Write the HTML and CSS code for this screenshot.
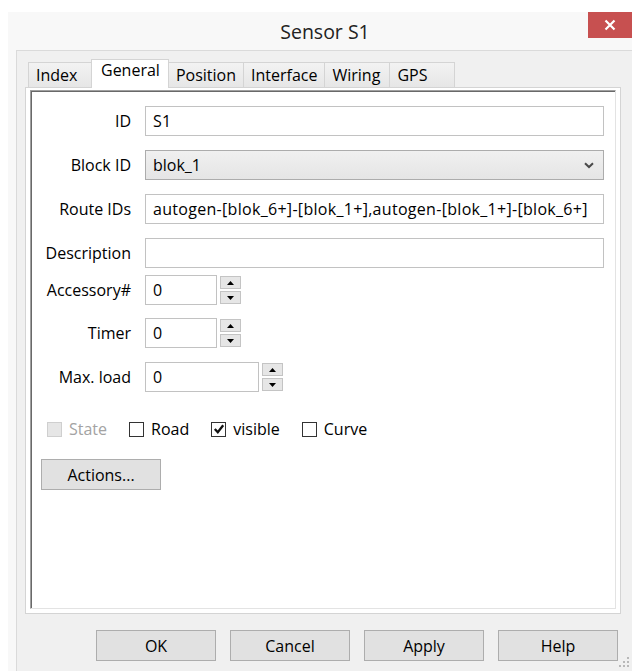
FILE: index.html
```html
<!DOCTYPE html>
<html>
<head>
<meta charset="utf-8">
<title>Sensor S1</title>
<link rel="stylesheet" href="styles.css">
</head>
<body>
<div class="window">
  <div class="titlebar">
    <span class="title">Sensor S1</span>
    <div class="close">
      <svg width="12" height="12" viewBox="0 0 12 12"><path d="M1.5 1.5 L10.5 10.5 M10.5 1.5 L1.5 10.5" stroke="#fff" stroke-width="2.2" fill="none"/></svg>
    </div>
  </div>
  <div class="client">
    <div class="tabctl">
      <div class="tabstrip">
        <span class="tab">Index</span>
        <span class="tab active">General</span>
        <span class="tab">Position</span>
        <span class="tab">Interface</span>
        <span class="tab">Wiring</span>
        <span class="tab">GPS</span>
      </div>
      <div class="tabpanel">
        <div class="sunken">
          <div class="row first">
            <span class="lbl">ID</span>
            <div class="input wide">S1</div>
          </div>
          <div class="row">
            <span class="lbl">Block ID</span>
            <div class="select wide">
              <span>blok_1</span>
              <svg class="chev" width="10" height="7" viewBox="0 0 10 7"><path d="M1 1.2 L5 5 L9 1.2" stroke="#4a4a4a" stroke-width="2" fill="none"/></svg>
            </div>
          </div>
          <div class="row">
            <span class="lbl">Route IDs</span>
            <div class="input wide">autogen-[blok_6+]-[blok_1+],autogen-[blok_1+]-[blok_6+]</div>
          </div>
          <div class="row">
            <span class="lbl">Description</span>
            <div class="input wide"></div>
          </div>
          <div class="row tight">
            <span class="lbl">Accessory#</span>
            <div class="input num">0</div>
            <div class="spin">
              <span class="sb"><svg width="7" height="4" viewBox="0 0 7 4"><path d="M0 4 L3.5 0 L7 4 Z" fill="#000"/></svg></span>
              <span class="sb"><svg width="7" height="4" viewBox="0 0 7 4"><path d="M0 0 L3.5 4 L7 0 Z" fill="#000"/></svg></span>
            </div>
          </div>
          <div class="row r13">
            <span class="lbl">Timer</span>
            <div class="input num">0</div>
            <div class="spin">
              <span class="sb"><svg width="7" height="4" viewBox="0 0 7 4"><path d="M0 4 L3.5 0 L7 4 Z" fill="#000"/></svg></span>
              <span class="sb"><svg width="7" height="4" viewBox="0 0 7 4"><path d="M0 0 L3.5 4 L7 0 Z" fill="#000"/></svg></span>
            </div>
          </div>
          <div class="row">
            <span class="lbl">Max. load</span>
            <div class="input numwide">0</div>
            <div class="spin">
              <span class="sb"><svg width="7" height="4" viewBox="0 0 7 4"><path d="M0 4 L3.5 0 L7 4 Z" fill="#000"/></svg></span>
              <span class="sb"><svg width="7" height="4" viewBox="0 0 7 4"><path d="M0 0 L3.5 4 L7 0 Z" fill="#000"/></svg></span>
            </div>
          </div>

          <div class="checks">
            <label class="chk disabled"><span class="box"></span>State</label>
            <label class="chk"><span class="box"></span>Road</label>
            <label class="chk"><span class="box"><svg width="12" height="12" viewBox="0 0 12 12"><path d="M1.8 6 L4.8 9.3 L10.2 2.3" stroke="#111" stroke-width="2.3" fill="none"/></svg></span>visible</label>
            <label class="chk"><span class="box"></span>Curve</label>
          </div>

          <div class="btn actions">Actions...</div>
        </div>
      </div>
    </div>
    <div class="buttons">
      <div class="btn">OK</div>
      <div class="btn">Cancel</div>
      <div class="btn">Apply</div>
      <div class="btn">Help</div>
    </div>
    <svg class="grip" width="11" height="11" viewBox="0 0 11 11">
      <rect x="8" y="0" width="2" height="2" fill="#b8b8b8"/>
      <rect x="4" y="4" width="2" height="2" fill="#b8b8b8"/>
      <rect x="8" y="4" width="2" height="2" fill="#b8b8b8"/>
      <rect x="0" y="8" width="2" height="2" fill="#b8b8b8"/>
      <rect x="4" y="8" width="2" height="2" fill="#b8b8b8"/>
      <rect x="8" y="8" width="2" height="2" fill="#b8b8b8"/>
    </svg>
  </div>
</div>
</body>
</html>
```
FILE: styles.css
```css
* { box-sizing: border-box; }

html, body {
  margin: 0;
  padding: 0;
  background: #ffffff;
  overflow: hidden;
}

body {
  font-family: "Open Sans", "Noto Sans", sans-serif;
  font-size: 16px;
  color: #000;
}

.window {
  position: relative;
  margin: 12px 0 0 8px;
  width: 632px;
  height: 659px;
  background: #f8f8f8;
}

.titlebar {
  position: relative;
  height: 38px;
  display: flex;
  align-items: center;
  justify-content: center;
  padding-left: 2px;
}

.title {
  font-size: 19.5px;
  color: #222;
}

.close {
  position: absolute;
  top: 0;
  right: 8px;
  width: 44px;
  height: 26px;
  background: #c75050;
  display: flex;
  align-items: center;
  justify-content: center;
}

.client {
  position: relative;
  margin-left: 8px;
  height: 621px;
  background: #f0f0f0;
  border-top: 1px solid #dadada;
  border-left: 1px solid #dadada;
  padding: 8px 0 0 8px;
}

.tabctl {
  width: 596px;
}

.tabstrip {
  display: flex;
  align-items: flex-end;
  height: 28px;
  padding-left: 3px;
  position: relative;
  z-index: 1;
}

.tab {
  height: 25px;
  min-width: 66px;
  padding: 2px 7px 0 7px;
  border: 1px solid #d4d4d4;
  border-bottom: none;
  margin-right: -1px;
  background: linear-gradient(#f2f2f2, #e6e6e6);
  line-height: 20px;
}

.tab.active {
  height: 29px;
  margin: 0 -2px -1px -2px;
  padding: 0 8px 0 9px;
  background: #ffffff;
  position: relative;
  z-index: 2;
}

.tab.active + .tab { margin-left: 1px; }

.tabpanel {
  height: 527px;
  background: #ffffff;
  border: 1px solid #d4d4d4;
  padding: 2px 4px 4px 4px;
}

.sunken {
  height: 519px;
  border-top: 1px solid #a0a0a0;
  border-left: 1px solid #a0a0a0;
  border-right: 1px solid #e3e3e3;
  border-bottom: 1px solid #e3e3e3;
  box-shadow: inset 1px 1px 0 #696969;
  padding: 0 11px 0 1px;
}

.row {
  display: flex;
  align-items: center;
  height: 30px;
  margin-top: 14px;
}

.row.first { margin-top: 15px; }
.row.tight { margin-top: 7px; }
.row.r13 { margin-top: 13px; }

.lbl {
  width: 99px;
  margin-right: 14px;
  text-align: right;
  white-space: nowrap;
}

.input {
  height: 30px;
  border: 1px solid #c2c2c2;
  background: #fff;
  padding: 0 7px;
  line-height: 28px;
  white-space: nowrap;
  overflow: hidden;
  letter-spacing: 0.3px;
}

.wide { flex: 1; }
.num { width: 72px; }
.numwide { width: 114px; }

.select {
  height: 30px;
  border: 1px solid #acacac;
  background: linear-gradient(#f0f0f0, #e5e5e5);
  padding: 0 9px 0 7px;
  display: flex;
  align-items: center;
  justify-content: space-between;
}

.spin {
  display: flex;
  flex-direction: column;
  gap: 2px;
  margin-left: 3px;
}

.sb {
  width: 21px;
  height: 13px;
  border: 1px solid #c4c4c4;
  background: #e6e6e6;
  display: flex;
  align-items: center;
  justify-content: center;
}

.checks {
  display: flex;
  align-items: center;
  height: 20px;
  margin-top: 27px;
  padding-left: 15px;
  gap: 22px;
}

.chk {
  display: flex;
  align-items: center;
  gap: 7px;
}

.box {
  width: 15px;
  height: 15px;
  border: 1px solid #333;
  background: #fff;
  display: flex;
  align-items: center;
  justify-content: center;
}

.chk.disabled { color: #a3a3a3; }
.chk.disabled .box {
  border-color: #cfcfcf;
  background: #e6e6e6;
}

.btn {
  width: 120px;
  height: 31px;
  border: 1px solid #adadad;
  background: #e1e1e1;
  display: flex;
  align-items: center;
  justify-content: center;
}

.actions {
  margin: 20px 0 0 9px;
}

.buttons {
  width: 596px;
  display: flex;
  justify-content: flex-end;
  gap: 14px;
  padding-right: 3px;
  margin-top: 16px;
}

.grip {
  position: absolute;
  right: 10px;
  bottom: 3px;
}
```
